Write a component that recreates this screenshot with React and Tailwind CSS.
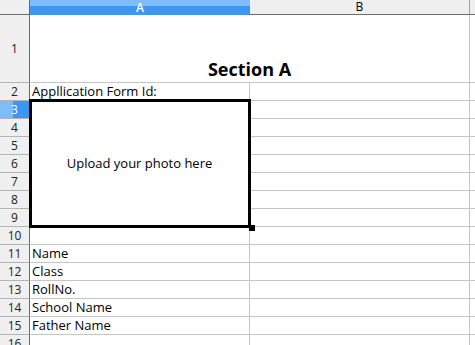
import * as React from 'react';

const rowHead = 'flex items-center justify-center bg-[#f0f0f0] border-r border-r-[#6b6b6b] border-b border-b-[#b4b4b4] text-[12px] text-[#222]';
const cell = 'border-r border-b border-[#c6c6c6] pl-[2px] flex items-end text-[13px] leading-[17px] text-black';

function RowHead({ n, active }) {
  if (active) {
    return (
      <div className="flex items-center justify-center bg-[linear-gradient(to_right,#7fbcfb_45%,#3b97f6_45%)] border-r border-r-[#6b6b6b] border-b border-b-[#b4b4b4] text-[12px] text-white">
        {n}
      </div>
    );
  }
  return <div className={rowHead}>{n}</div>;
}

export default function App() {
  const lower = [
    [10, ''],
    [11, 'Name'],
    [12, 'Class'],
    [13, 'RollNo.'],
    [14, 'School Name'],
    [15, 'Father Name'],
    [16, ''],
  ];

  return (
    <div className="w-[475px] h-[345px] overflow-hidden bg-white" style={{ fontFamily: '"Open Sans", "DejaVu Sans", sans-serif' }}>
      <div className="grid grid-cols-[30px_220px_220px_1fr] grid-rows-[15px_68px_repeat(15,18px)]">
        {/* column headers */}
        <div className="bg-[#f0f0f0] border-r border-r-[#6b6b6b] border-b border-b-[#6b6b6b]" />
        <div className="bg-[linear-gradient(to_bottom,#7fbcfb_40%,#3b97f6_40%)] flex items-center justify-center text-[12px] font-semibold text-white leading-none">
          A
        </div>
        <div className="bg-[#efefef] border-r border-r-[#a0a0a0] border-b border-b-[#6b6b6b] flex items-center justify-center text-[12px] text-black leading-none">
          B
        </div>
        <div className="bg-[#efefef] border-b border-b-[#6b6b6b]" />

        {/* row 1 */}
        <RowHead n={1} />
        <div className="col-span-2 border-r border-b border-[#c6c6c6] flex items-end justify-center pb-[2px]">
          <span className="text-[18px] font-bold leading-[22px] text-black">Section A</span>
        </div>
        <div className="border-b border-[#c6c6c6]" />

        {/* row 2 */}
        <RowHead n={2} />
        <div className={cell}>Appllication Form Id:</div>
        <div className={cell} />
        <div className="border-b border-[#c6c6c6]" />

        {/* rows 3-9 */}
        <RowHead n={3} active />
        <div className="row-span-7 relative border-r border-b border-[#c6c6c6] flex items-center justify-center text-[13px] text-black">
          <div className="absolute -top-[2px] -left-[1px] right-[-2px] bottom-[-2px] border-[3px] border-black" />
          <div className="absolute right-[-6px] bottom-[-5px] w-[6px] h-[6px] bg-black" />
          <span className="relative">Upload your photo here</span>
        </div>
        <div className={cell} />
        <div className="border-b border-[#c6c6c6]" />
        {[4, 5, 6, 7, 8, 9].map((n) => (
          <React.Fragment key={n}>
            <RowHead n={n} />
            <div className={cell} />
            <div className="border-b border-[#c6c6c6]" />
          </React.Fragment>
        ))}

        {/* rows 10-16 */}
        {lower.map(([n, text]) => (
          <React.Fragment key={n}>
            <RowHead n={n} />
            <div className={cell}>{text}</div>
            <div className={cell} />
            <div className="border-b border-[#c6c6c6]" />
          </React.Fragment>
        ))}
      </div>
    </div>
  );
}
